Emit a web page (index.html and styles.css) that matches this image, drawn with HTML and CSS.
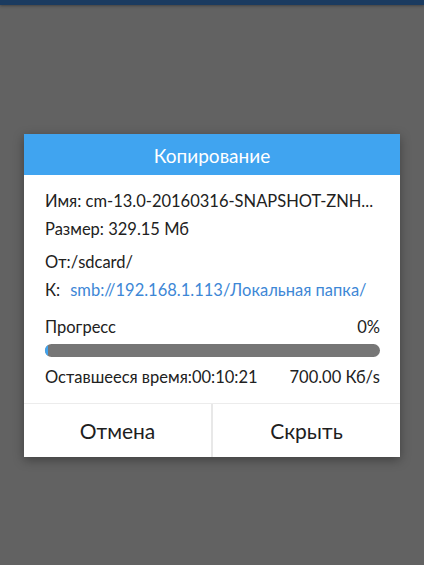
FILE: index.html
```html
<!DOCTYPE html>
<html lang="ru">
<head>
<meta charset="utf-8">
<link rel="stylesheet" href="styles.css">
</head>
<body>
<div class="topbar"></div>
<div class="dialog">
  <div class="header">Копирование</div>
  <div class="content">
    <div class="line">Имя: cm-13.0-20160316-SNAPSHOT-ZNH...</div>
    <div class="line">Размер: 329.15 Мб</div>
    <div class="line gap1">От:/sdcard/</div>
    <div class="line">К:<span class="link">smb://192.168.1.113/Локальная папка/</span></div>
    <div class="line split gap2"><span>Прогресс</span><span>0%</span></div>
    <div class="bar"><div class="fill"></div></div>
    <div class="line split gap3"><span>Оставшееся время:00:10:21</span><span>700.00 Кб/s</span></div>
  </div>
  <div class="buttons">
    <div class="btn">Отмена</div>
    <div class="btn">Скрыть</div>
  </div>
</div>
</body>
</html>
```
FILE: styles.css
```css
html, body {
  margin: 0;
  padding: 0;
}
body {
  background: #626262;
  height: 565px;
  overflow: hidden;
  font-family: Lato, "Noto Sans", sans-serif;
  color: #212121;
}
.topbar {
  height: 5px;
  background: #1b3b60;
  box-shadow: 0 1px 3px rgba(0,0,0,0.35);
}
.dialog {
  margin: 129px 0 0 24px;
  width: 376px;
  background: #fff;
  box-shadow: 0 3px 10px rgba(0,0,0,0.35);
}
.header {
  height: 41px;
  background: #40a4f0;
  color: #fff;
  font-size: 19px;
  line-height: 43px;
  text-align: center;
}
.content {
  padding: 12px 20px 12px 21px;
  border-bottom: 1px solid #ececec;
}
.line {
  font-size: 16.5px;
  line-height: 28px;
  white-space: nowrap;
}
.gap1 { margin-top: 5px; }
.gap2 { margin-top: 9px; }
.gap3 { margin-top: 6px; }
.split {
  display: flex;
  justify-content: space-between;
}
.link {
  color: #3d87d6;
  margin-left: 10px;
}
.bar {
  margin-top: 3px;
  height: 13px;
  border-radius: 7px;
  background: #767676;
  overflow: hidden;
}
.fill {
  width: 3px;
  height: 100%;
  background: #3fa3ef;
}
.buttons {
  display: flex;
  height: 53px;
}
.btn {
  flex: 1;
  display: flex;
  align-items: center;
  justify-content: center;
  font-size: 21px;
  color: #1e1e1e;
}
.btn + .btn {
  border-left: 2px solid #e8e8e8;
}
```
